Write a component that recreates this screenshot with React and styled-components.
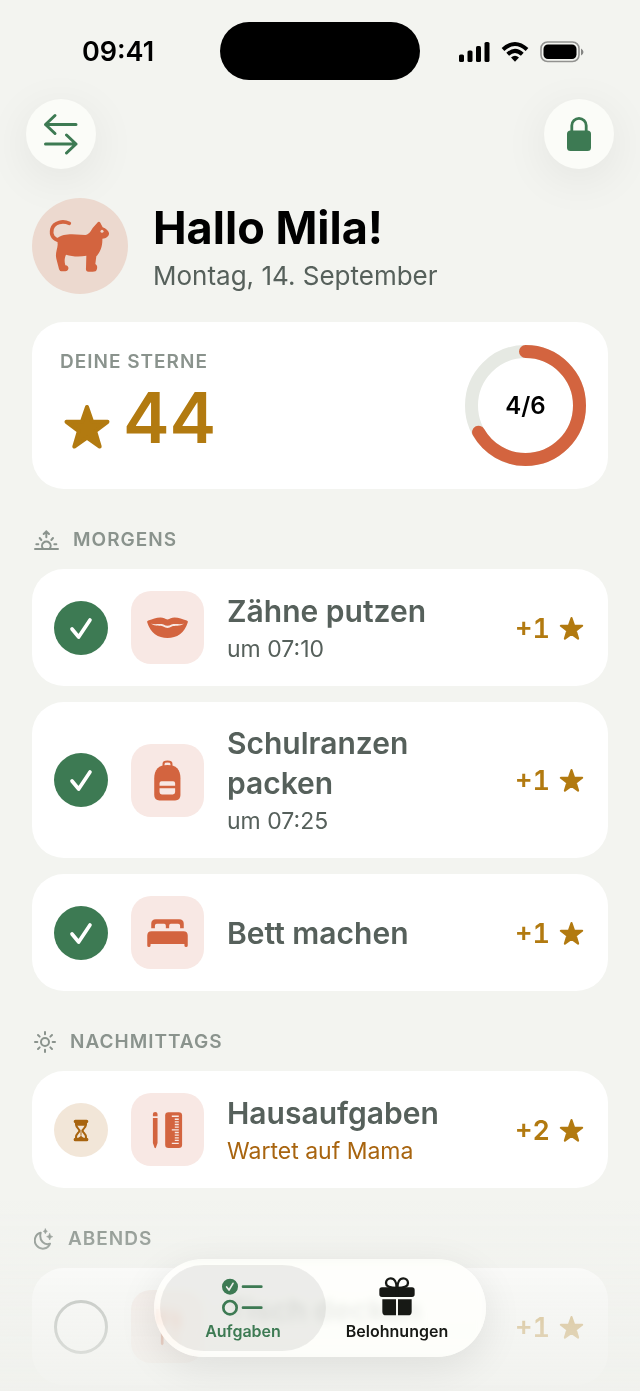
import React, { useState } from 'react'
import styled, { createGlobalStyle, ThemeProvider } from 'styled-components'

const theme = {
    color: {
        page: '#f3f4f0',
        card: '#ffffff',
        glass: '#fbfcf8',
        green: '#3d7a53',
        orange: '#d3643f',
        gold: '#b27a10',
        amber: '#a8640f',
        ink: '#000000',
        text: '#56605b',
        muted: '#8a938d',
        track: '#e6e9e3',
        tile: '#f8e8e4',
        avatar: '#ecd9cf',
        waiting: '#f2e6d8',
    },
}

const sections = [
    {
        id: 'morgens',
        title: 'Morgens',
        icon: 'sunrise',
        tasks: [
            { id: 'zaehne', title: 'Zähne putzen', note: 'um 07:10', icon: 'lips', stars: 1, state: 'done' },
            { id: 'ranzen', title: 'Schulranzen packen', note: 'um 07:25', icon: 'backpack', stars: 1, state: 'done' },
            { id: 'bett', title: 'Bett machen', icon: 'bed', stars: 1, state: 'done' },
        ],
    },
    {
        id: 'nachmittags',
        title: 'Nachmittags',
        icon: 'sun',
        tasks: [
            { id: 'hausaufgaben', title: 'Hausaufgaben', note: 'Wartet auf Mama', icon: 'pencil', stars: 2, state: 'waiting' },
        ],
    },
    {
        id: 'abends',
        title: 'Abends',
        icon: 'moon',
        tasks: [
            { id: 'tisch', title: 'Tisch decken', note: '\u00a0', icon: 'fork', stars: 1, state: 'open' },
        ],
    },
]

function App() {
    const [tab, setTab] = useState('aufgaben')

    return (
        <ThemeProvider theme={theme}>
            <GlobalStyle />
            <StatusBar>
                <Time>09:41</Time>
                <Island />
                <Signals>
                    <SignalIcon />
                    <WifiIcon />
                    <BatteryIcon />
                </Signals>
            </StatusBar>

            <Toolbar>
                <RoundButton type="button" aria-label="Kind wechseln"><SwapIcon /></RoundButton>
                <RoundButton type="button" aria-label="Elternbereich"><LockIcon /></RoundButton>
            </Toolbar>

            <Main>
                <Header>
                    <Avatar><CatIcon /></Avatar>
                    <div>
                        <h1>Hallo Mila!</h1>
                        <p>Montag, 14. September</p>
                    </div>
                </Header>

                <StarsCard>
                    <div>
                        <Caption>Deine Sterne</Caption>
                        <Total>
                            <StarIcon size={48} />
                            <span>44</span>
                        </Total>
                    </div>
                    <Progress done={4} all={6} />
                </StarsCard>

                {sections.map((section) => (
                    <section key={section.id}>
                        <SectionTitle>
                            {sectionIcons[section.icon]}
                            {section.title}
                        </SectionTitle>
                        <TaskList>
                            {section.tasks.map((task) => <Task key={task.id} task={task} />)}
                        </TaskList>
                    </section>
                ))}
            </Main>

            <Fade />
            <TabBar>
                <Tab type="button" $active={tab === 'aufgaben'} onClick={() => setTab('aufgaben')}>
                    <ChecklistIcon />
                    Aufgaben
                </Tab>
                <Tab type="button" $active={tab === 'belohnungen'} onClick={() => setTab('belohnungen')}>
                    <GiftIcon />
                    Belohnungen
                </Tab>
            </TabBar>
        </ThemeProvider>
    )
}

export default App

function Task({ task }) {
    const [state, setState] = useState(task.state)

    return (
        <TaskRow>
            <Check $state={state}>
                <input
                    id={task.id}
                    type="checkbox"
                    checked={state === 'done'}
                    disabled={state === 'waiting'}
                    onChange={(e) => setState(e.target.checked ? 'done' : 'open')}
                />
                {state === 'done' && <CheckIcon />}
                {state === 'waiting' && <HourglassIcon />}
            </Check>
            <Tile>
                <svg viewBox="0 0 220 220" aria-hidden="true">{taskIcons[task.icon]}</svg>
            </Tile>
            <TaskText>
                <label htmlFor={task.id}>{task.title}</label>
                {task.note && <Note $waiting={state === 'waiting'}>{task.note}</Note>}
            </TaskText>
            <Reward>
                +{task.stars}
                <StarIcon size={25} />
            </Reward>
        </TaskRow>
    )
}

function Progress({ done, all }) {
    const length = 2 * Math.PI * 54
    return (
        <Ring>
            <svg viewBox="0 0 121 121" aria-hidden="true">
                <circle cx="60.5" cy="60.5" r="54" />
                <circle
                    className="value"
                    cx="60.5"
                    cy="60.5"
                    r="54"
                    strokeDasharray={`${(length * done) / all} ${length}`}
                    transform="rotate(-90 60.5 60.5)"
                />
            </svg>
            <span>{done}/{all}</span>
        </Ring>
    )
}

/* icons */

const StarIcon = ({ size }) => (
    <svg width={size} height={size} viewBox="0 0 48 48" fill="currentColor" stroke="currentColor" strokeWidth="4" strokeLinejoin="round" aria-hidden="true">
        <path d="M24 4 L29 18.500 L44.500 18.800 L32.200 28.200 L36.700 43.500 L24 34.600 L11.300 43.500 L15.800 28.200 L3.500 18.800 L19 18.500 Z" />
    </svg>
)

const SignalIcon = () => (
    <svg width="31" height="22" viewBox="0 0 31 22" aria-hidden="true">
        <rect x="0" y="13.500" width="5" height="7.500" rx="1.600" />
        <rect x="8.500" y="9.500" width="5" height="11.500" rx="1.600" />
        <rect x="17" y="5" width="5" height="16" rx="1.600" />
        <rect x="25.500" y="1" width="5" height="20" rx="1.600" />
    </svg>
)

const WifiIcon = () => (
    <svg width="28" height="22" viewBox="0 0 28 22" fill="none" stroke="#000" strokeWidth="4" aria-hidden="true">
        <path d="M2 8.500 Q14 -2.500 26 8.500" />
        <path d="M6.700 13.300 Q14 6.300 21.300 13.300" />
        <path d="M14 20.800 L10 16.500 Q14 13.200 18 16.500 Z" fill="#000" stroke="none" />
    </svg>
)

const BatteryIcon = () => (
    <svg width="44" height="22" viewBox="0 0 44 22" aria-hidden="true">
        <rect x="1" y="1" width="38" height="19.500" rx="6.500" fill="none" stroke="#000" strokeOpacity="0.4" strokeWidth="1.600" />
        <rect x="3.500" y="3.500" width="33" height="14.500" rx="4.500" />
        <path d="M41 7.500 Q43.500 9 43.500 11 Q43.500 13 41 14.500 Z" fillOpacity="0.45" />
    </svg>
)

const SwapIcon = () => (
    <svg width="36" height="42" viewBox="0 0 36 42" fill="none" stroke="currentColor" strokeWidth="3" strokeLinecap="round" strokeLinejoin="round" aria-hidden="true">
        <path d="M33 11.500 H2.500 M12 2.500 L2.500 11.500 L12 20.500" />
        <path d="M2.500 31 H33 M23.500 22 L33 31 L23.500 40" />
    </svg>
)

const LockIcon = () => (
    <svg width="26" height="36" viewBox="0 0 26 36" aria-hidden="true">
        <path d="M5.800 17 V9.500 a7.200 7.200 0 0 1 14.400 0 V17" fill="none" stroke="currentColor" strokeWidth="2.800" />
        <rect x="1" y="14.500" width="24" height="20.500" rx="3.500" fill="currentColor" />
    </svg>
)

const CatIcon = () => (
    <svg viewBox="0 0 288 288" fill="currentColor" aria-hidden="true">
        <path d="M112 76 C94 68 66 71 60 93 C55 113 66 124 82 127" fill="none" stroke="currentColor" strokeWidth="11" strokeLinecap="round" />
        <path d="M76 121 C88 111 102 109 120 109 L160 111 C170 110 176 101 182 90 L198 72 Q202 69 205 74 L212 88 C222 92 229 98 231 105 C232 114 223 121 211 122 C212 145 205 163 193 175 L190 198 C196 202 196 207 195 212 C194 219 189 221 182 221 L170 221 C163 221 161 217 162 210 L163 173 C143 177 121 176 102 170 C97 180 97 193 100 202 C108 203 110 207 109 213 C107 219 102 220 95 220 L88 220 C83 219 81 214 80 209 L73 182 C69 166 76 154 77 140 Z" />
        <circle className="eye" cx="210" cy="100" r="4.500" />
    </svg>
)

const CheckIcon = () => (
    <svg viewBox="0 0 162 162" fill="none" stroke="#fff" strokeWidth="11" strokeLinecap="round" strokeLinejoin="round" aria-hidden="true">
        <path d="M54 84 L74 108 L108 57" />
    </svg>
)

const HourglassIcon = () => (
    <svg viewBox="0 0 162 162" fill="none" stroke="currentColor" strokeWidth="6" strokeLinejoin="round" aria-hidden="true">
        <path d="M64 50 H98 Q103 50 103 55 Q103 60 99 61 L97 68 H65 L63 61 Q59 60 59 55 Q59 50 64 50 Z" fill="currentColor" stroke="none" />
        <rect x="59" y="104" width="44" height="11" rx="5" fill="currentColor" stroke="none" />
        <path d="M66 60 V64 C66 74 76 77 76 83 C76 89 66 92 66 102 V108 H96 V102 C96 92 86 89 86 83 C86 77 96 74 96 64 V60 Z" />
        <path d="M81 80 V98" strokeWidth="3" />
        <path d="M72 106 L81 98 L90 106 Z" fill="currentColor" stroke="none" />
    </svg>
)

const ChecklistIcon = () => (
    <svg width="42" height="40" viewBox="0 0 126 120" fill="none" stroke="currentColor" strokeWidth="8" strokeLinecap="round" strokeLinejoin="round" aria-hidden="true">
        <circle cx="24" cy="29" r="24" fill="currentColor" stroke="none" />
        <path d="M14 30 L21 39 L33 19" stroke="#ecedea" strokeWidth="5" />
        <circle cx="24" cy="92" r="20" />
        <path d="M63 29 H118 M63 92 H118" />
    </svg>
)

const GiftIcon = () => (
    <svg width="42" height="40" viewBox="0 0 126 120" fill="currentColor" aria-hidden="true">
        <path d="M62 33 C50 33 30 32 30 18 C30 9 37 4 44 4 C55 4 62 16 62 33 Z M64 33 C76 33 96 32 96 18 C96 9 89 4 82 4 C71 4 64 16 64 33 Z" fill="none" stroke="currentColor" strokeWidth="7" />
        <path d="M18 31 H60 V60 H18 Q10 60 10 52 V39 Q10 31 18 31 Z M66 31 H108 Q116 31 116 39 V52 Q116 60 108 60 H66 Z" />
        <path d="M19 67 H60 V115 H30 Q19 115 19 104 Z M66 67 H107 V104 Q107 115 96 115 H66 Z" />
        <rect x="58" y="31" width="10" height="29" />
    </svg>
)

const taskIcons = {
    lips: (
        <>
            <path d="M49 95 Q47 90 52 89 C66 86 75 80 89 80 C98 80 103 84 110 86 C117 84 122 80 131 80 C145 80 154 86 168 89 Q173 90 171 95 C162 126 138 142 110 142 C82 142 58 126 49 95 Z" fill="currentColor" />
            <path className="cut" d="M60 99 C74 102 87 98 98 101 Q110 109 122 101 C133 98 146 102 160 99 C146 107 132 104 123 107 Q110 116 97 107 C88 104 74 107 60 99 Z" />
        </>
    ),
    backpack: (
        <>
            <path d="M98 66 V60 Q98 53 110 53 Q122 53 122 60 V66" fill="none" stroke="currentColor" strokeWidth="6" />
            <path d="M70 154 V103 C70 76 84 63 110 63 C136 63 149 76 149 103 V154 Q149 170 133 170 H86 Q70 170 70 154 Z" fill="currentColor" />
            <path className="cut" d="M86 126 V118 Q86 112 92 112 H127 Q133 112 133 118 V126 Z M86 133 H133 V145 Q133 152 126 152 H93 Q86 152 86 145 Z" />
        </>
    ),
    bed: (
        <>
            <path d="M61 97 V84 Q61 70 75 70 H145 Q159 70 159 84 V97 H148 V90 Q148 84 142 84 H120 Q115 84 115 90 V97 H105 V90 Q105 84 100 84 H78 Q72 84 72 90 V97 Z" fill="currentColor" />
            <path d="M49 149 V119 Q49 106 62 106 H158 Q171 106 171 119 V149 Q171 154 166 154 Q161 154 161 149 V145 H59 V149 Q59 154 54 154 Q49 154 49 149 Z" fill="currentColor" />
        </>
    ),
    pencil: (
        <>
            <path d="M66 70 V63 Q66 57 73 57 Q80 57 80 63 V70 Z M66 75 H80 V151 L75 165 Q73 168 71 165 L66 151 Z" fill="currentColor" />
            <rect x="103" y="58" width="51" height="108" rx="10" fill="currentColor" />
            <path
                className="ticks"
                d="M123 70 H144 M132 79 H144 M132 87 H144 M132 95 H144 M132 103 H144 M123 111 H144 M132 119 H144 M132 127 H144 M132 135 H144 M132 143 H144 M123 152 H144"
            />
        </>
    ),
    fork: (
        <>
            <path d="M76 57 V92 Q76 104 90 106 V163 Q94 170 98 163 V106 Q112 104 112 92 V57 H104 V90 H98 V57 H90 V90 H84 V57 Z" fill="currentColor" />
            <path d="M128 163 V57 Q148 66 148 112 H136 V163 Q132 170 128 163 Z" fill="currentColor" />
        </>
    ),
}

const sectionIcons = {
    sunrise: (
        <svg width="25" height="22" viewBox="0 0 75 66" aria-hidden="true">
            <path d="M3 60 H72 M27 59 A13 13 0 1 1 47 59 M37 7 V25 M29 15 L37 7 L45 15 M7 46 H13 M61 46 H67 M17 27 L22 33 M57 27 L52 33" />
        </svg>
    ),
    sun: (
        <svg width="22" height="22" viewBox="0 0 66 66" aria-hidden="true">
            <circle cx="33" cy="33" r="12" />
            <path d="M33 3 V10 M33 56 V63 M3 33 H10 M56 33 H63 M12 12 L17 17 M49 49 L54 54 M54 12 L49 17 M17 49 L12 54" />
        </svg>
    ),
    moon: (
        <svg width="20" height="22" viewBox="0 0 60 66" aria-hidden="true">
            <path d="M20 14 C3 18 -3 40 8 53 C20 67 42 64 48 47 C32 53 14 39 20 14 Z" />
            <path d="M34 3 Q35 9 40 10 Q35 11 34 17 Q33 11 28 10 Q33 9 34 3 Z M47 17 Q48 25 56 26 Q48 27 47 36 Q46 27 38 26 Q46 25 47 17 Z" strokeWidth="2" fill="currentColor" />
        </svg>
    ),
}

/* styles */

const GlobalStyle = createGlobalStyle`
    *{
        box-sizing: border-box;
        margin: 0;
        padding: 0;
    }

    body{
        background: ${theme.color.page};
        color: ${theme.color.ink};
        font-family: Inter, "Liberation Sans", sans-serif;
    }

    button{
        border: 0;
        font: inherit;
        cursor: pointer;
    }

    svg{
        display: block;
        flex: none;
    }
`

const StatusBar = styled.div`
    display: grid;
    grid-template-columns: 1fr 200px 1fr;
    align-items: center;
    padding-top: 22px;
`

const Time = styled.span`
    padding: 1px 0 0 16px;
    text-align: center;
    font-size: 27px;
    font-weight: 600;
`

const Island = styled.div`
    height: 58px;
    border-radius: 29px;
    background: #000;
`

const Signals = styled.div`
    display: flex;
    justify-content: center;
    gap: 11px;
    padding: 2px 18px 0 0;
`

const Toolbar = styled.div`
    display: flex;
    justify-content: space-between;
    padding: 19px 26px 0;
`

const RoundButton = styled.button`
    display: grid;
    place-items: center;
    width: 70px;
    height: 70px;
    border-radius: 50%;
    background: ${({ theme }) => theme.color.glass};
    color: ${({ theme }) => theme.color.green};
    box-shadow: 0 10px 48px rgba(0, 0, 0, 0.07);
`

const Main = styled.main`
    padding: 29px 32px 0;
`

const Header = styled.header`
    display: flex;
    gap: 25px;

    h1{
        padding-top: 1px;
        font-size: 45px;
        line-height: 58px;
        font-weight: 700;
    }

    p{
        color: ${({ theme }) => theme.color.text};
        font-size: 26px;
        line-height: 37px;
    }
`

const Avatar = styled.div`
    width: 96px;
    height: 96px;
    border-radius: 50%;
    background: ${({ theme }) => theme.color.avatar};
    color: ${({ theme }) => theme.color.orange};

    .eye{
        fill: ${({ theme }) => theme.color.avatar};
    }
`

const StarsCard = styled.div`
    display: flex;
    align-items: center;
    justify-content: space-between;
    margin-top: 28px;
    padding: 23px 22px 23px 28px;
    border-radius: 32px;
    background: ${({ theme }) => theme.color.card};
`

const Caption = styled.p`
    color: ${({ theme }) => theme.color.muted};
    font-size: 19px;
    line-height: 24px;
    font-weight: 600;
    letter-spacing: 1px;
    text-transform: uppercase;
`

const Total = styled.p`
    display: flex;
    align-items: center;
    gap: 12px;
    padding-left: 3px;
    color: ${({ theme }) => theme.color.gold};
    font-size: 70px;
    line-height: 88px;
    font-weight: 600;

    svg{
        margin-top: 18px;
    }
`

const Ring = styled.div`
    display: grid;
    place-items: center;
    width: 121px;
    height: 121px;
    font-size: 24px;
    font-weight: 600;

    svg, span{
        grid-area: 1 / 1;
    }

    circle{
        fill: none;
        stroke: ${({ theme }) => theme.color.track};
        stroke-width: 13;
    }

    .value{
        stroke: ${({ theme }) => theme.color.orange};
        stroke-linecap: round;
    }
`

const SectionTitle = styled.h2`
    display: flex;
    align-items: center;
    gap: 14px;
    margin: 41px 0 19px;
    padding-left: 2px;
    color: ${({ theme }) => theme.color.muted};
    font-size: 19px;
    line-height: 20px;
    font-weight: 600;
    letter-spacing: 1px;
    text-transform: uppercase;

    svg{
        margin: -1px 0;
        fill: none;
        stroke: currentColor;
        stroke-width: 6;
        stroke-linecap: round;
        stroke-linejoin: round;
    }
`

const TaskList = styled.ul`
    display: grid;
    gap: 16px;
    list-style: none;
`

const TaskRow = styled.li`
    display: flex;
    align-items: center;
    gap: 23px;
    min-height: 117px;
    padding: 21px 24px 21px 22px;
    border-radius: 32px;
    background: ${({ theme }) => theme.color.card};
`

const Check = styled.span`
    display: grid;
    flex: none;
    width: 54px;
    height: 54px;
    color: ${({ theme }) => theme.color.amber};

    input, svg{
        grid-area: 1 / 1;
    }

    input{
        appearance: none;
        border-radius: 50%;
        border: ${({ $state }) => ($state === 'open' ? '3px solid #858d88' : '0')};
        background: ${({ theme, $state }) => ({
            done: theme.color.green,
            waiting: theme.color.waiting,
            open: 'transparent',
        })[$state]};
    }

    svg{
        pointer-events: none;
    }
`

const Tile = styled.span`
    flex: none;
    width: 73px;
    height: 73px;
    border-radius: 20px;
    background: ${({ theme }) => theme.color.tile};
    color: ${({ theme }) => theme.color.orange};

    .cut{
        fill: ${({ theme }) => theme.color.tile};
    }

    .ticks{
        stroke: ${({ theme }) => theme.color.tile};
        stroke-width: 4;
    }
`

const TaskText = styled.div`
    flex: 1;
    color: ${({ theme }) => theme.color.text};

    label{
        display: block;
        font-size: 30px;
        line-height: 40px;
        font-weight: 600;
    }
`

const Note = styled.p`
    padding-top: 2px;
    color: ${({ theme, $waiting }) => ($waiting ? theme.color.amber : theme.color.text)};
    font-size: 23px;
    line-height: 32px;
`

const Reward = styled.span`
    display: flex;
    align-items: center;
    gap: 9px;
    padding-top: 1px;
    color: ${({ theme }) => theme.color.gold};
    font-size: 27px;
    font-weight: 600;
    font-variant-numeric: tabular-nums;
`

const Fade = styled.div`
    position: fixed;
    inset: auto 0 0;
    height: 190px;
    background: linear-gradient(
        rgba(241, 242, 238, 0),
        rgba(241, 242, 238, 0.16) 20%,
        rgba(241, 242, 238, 0.64) 50%,
        rgba(240, 241, 237, 0.9)
    );
    pointer-events: none;
`

const TabBar = styled.nav`
    position: fixed;
    bottom: 34px;
    left: 50%;
    display: flex;
    padding: 6px;
    border-radius: 49px;
    background: rgba(254, 254, 251, 0.65);
    backdrop-filter: blur(4px) brightness(1.04) saturate(1.5);
    box-shadow: 0 10px 40px rgba(0, 0, 0, 0.09);
    transform: translateX(-50%);
`

const Tab = styled.button`
    display: flex;
    flex-direction: column;
    align-items: center;
    gap: 4px;
    width: 166px;
    height: 86px;
    padding-top: 12px;
    border-radius: 43px;
    background: ${({ $active }) => ($active ? 'rgba(0, 0, 0, 0.07)' : 'transparent')};
    color: ${({ theme, $active }) => ($active ? theme.color.green : '#171915')};
    font-size: 16px;
    line-height: 20px;
    font-weight: 600;

    & + &{
        margin-left: -12px;
    }
`
